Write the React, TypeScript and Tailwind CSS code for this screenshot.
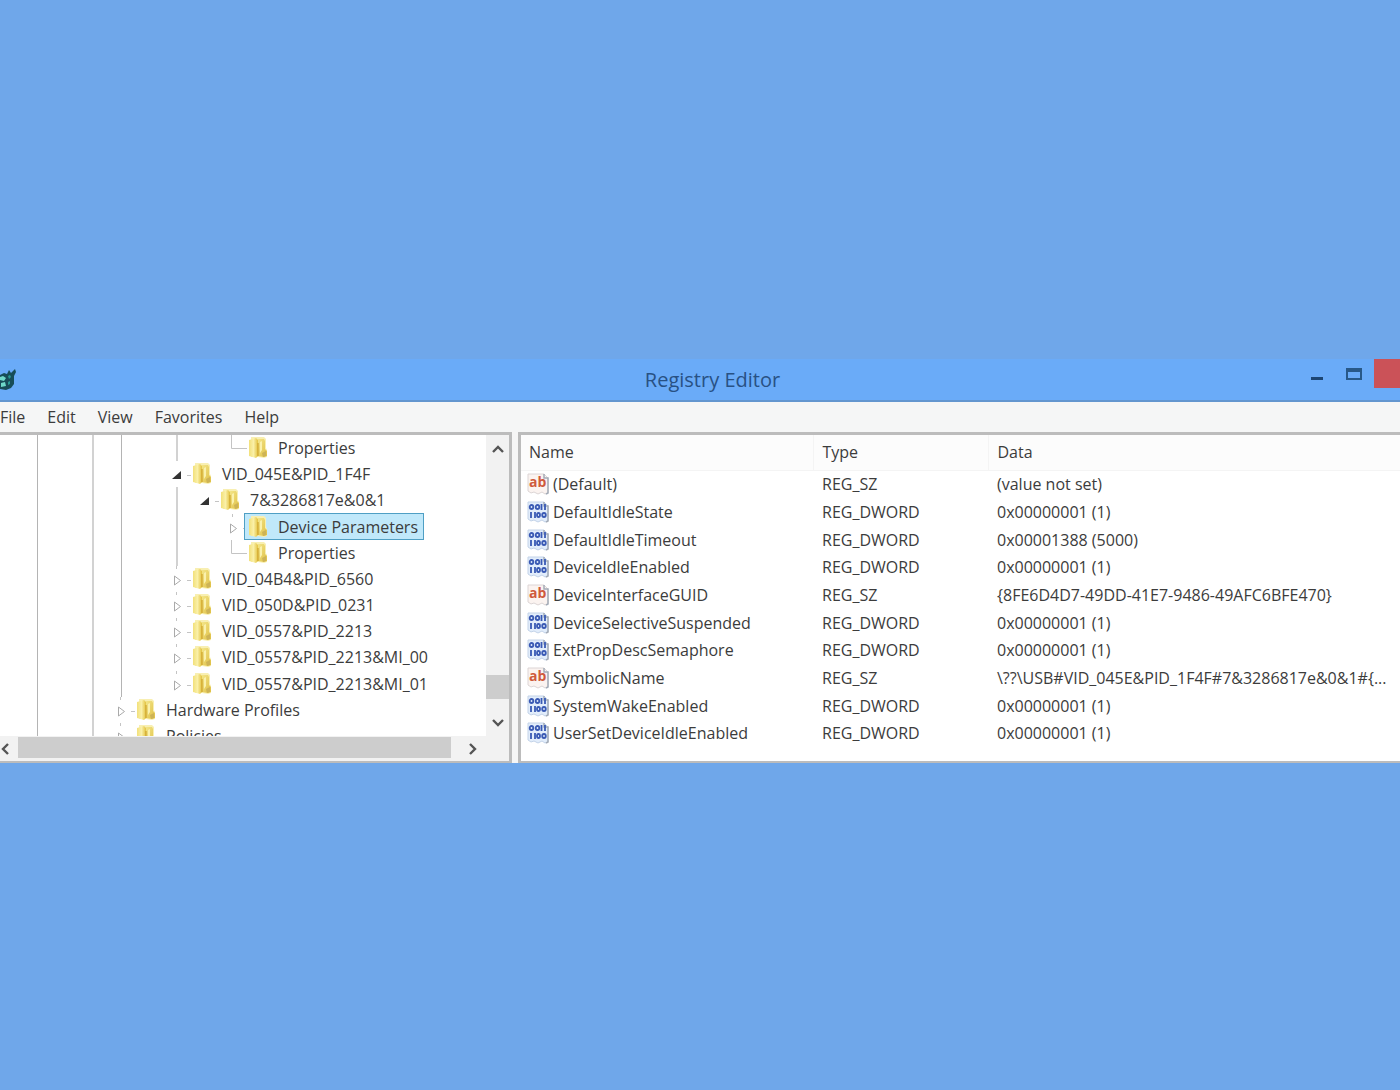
import clsx from 'clsx';
import { useState } from 'react';

type Node = {
  label: string;
  level: number;
  guides: number[];
  state: 'open' | 'closed' | 'leaf';
};

const NODES: Node[] = [
  { label: 'Properties', level: 7, guides: [0, 2, 3, 5], state: 'leaf' },
  { label: 'VID_045E&PID_1F4F', level: 5, guides: [0, 2, 3], state: 'open' },
  { label: '7&3286817e&0&1', level: 6, guides: [0, 2, 3, 5], state: 'open' },
  { label: 'Device Parameters', level: 7, guides: [0, 2, 3, 5], state: 'closed' },
  { label: 'Properties', level: 7, guides: [0, 2, 3, 5], state: 'leaf' },
  { label: 'VID_04B4&PID_6560', level: 5, guides: [0, 2, 3], state: 'closed' },
  { label: 'VID_050D&PID_0231', level: 5, guides: [0, 2, 3], state: 'closed' },
  { label: 'VID_0557&PID_2213', level: 5, guides: [0, 2, 3], state: 'closed' },
  { label: 'VID_0557&PID_2213&MI_00', level: 5, guides: [0, 2, 3], state: 'closed' },
  { label: 'VID_0557&PID_2213&MI_01', level: 5, guides: [0, 2, 3], state: 'closed' },
  { label: 'Hardware Profiles', level: 3, guides: [0, 2], state: 'closed' },
  { label: 'Policies', level: 3, guides: [0, 2], state: 'closed' }
];

const VALUES = [
  { name: '(Default)', type: 'REG_SZ', data: '(value not set)' },
  { name: 'DefaultIdleState', type: 'REG_DWORD', data: '0x00000001 (1)' },
  { name: 'DefaultIdleTimeout', type: 'REG_DWORD', data: '0x00001388 (5000)' },
  { name: 'DeviceIdleEnabled', type: 'REG_DWORD', data: '0x00000001 (1)' },
  {
    name: 'DeviceInterfaceGUID',
    type: 'REG_SZ',
    data: '{8FE6D4D7-49DD-41E7-9486-49AFC6BFE470}'
  },
  { name: 'DeviceSelectiveSuspended', type: 'REG_DWORD', data: '0x00000001 (1)' },
  { name: 'ExtPropDescSemaphore', type: 'REG_DWORD', data: '0x00000001 (1)' },
  {
    name: 'SymbolicName',
    type: 'REG_SZ',
    data: '\\??\\USB#VID_045E&PID_1F4F#7&3286817e&0&1#{...'
  },
  { name: 'SystemWakeEnabled', type: 'REG_DWORD', data: '0x00000001 (1)' },
  { name: 'UserSetDeviceIdleEnabled', type: 'REG_DWORD', data: '0x00000001 (1)' }
];

const MENUS = ['File', 'Edit', 'View', 'Favorites', 'Help'];

const AppIcon = () => (
  <svg width="18" height="24" viewBox="0 0 18 24" aria-hidden="true">
    <path d="M0 8l4-2 3 1 2-4 2 3 4-4 1 3-2 4 0 8-3 4-5 2-6-1z" fill="#174d58" />
    <path d="M0 10l3-1 3 2-2 3-4-1zM1 16l4-1 1 4-5 1z" fill="#6fd9c9" />
    <path d="M8 9l2-1 1 2-2 2zM8 15l2-1 0 3-2 1z" fill="#2b9a94" />
  </svg>
);

const FolderIcon = () => (
  <svg width="20" height="24" viewBox="0 0 20 24" className="shrink-0" aria-hidden="true">
    <defs>
      <linearGradient id="folder-left" x1="0" y1="0" x2="1" y2="0">
        <stop offset="0" stopColor="#f2e07a" />
        <stop offset=".5" stopColor="#faf0a8" />
        <stop offset="1" stopColor="#e2c23f" />
      </linearGradient>
      <linearGradient id="folder-right" x1="0" y1="0" x2="1" y2="1">
        <stop offset="0" stopColor="#f3e588" />
        <stop offset="1" stopColor="#dfbf45" />
      </linearGradient>
    </defs>
    <path d="M3 1h13l2 2v9l1 2v7l-3 1-6-1H3z" fill="#f8efb2" />
    <path d="M10 3h6l1 2v8l2 2v5l-3 1-6-1z" fill="url(#folder-right)" />
    <path d="M1 4l7-2 2 2v16l-2 2-7-2z" fill="url(#folder-left)" />
    <path d="M12 6l2-1v9l-2 3z" fill="#faf1ae" />
    <path d="M10 7v13" stroke="#cfa42e" strokeWidth="1.2" />
    <path d="M14 17l4-2v5l-3 1z" fill="#cdb356" />
  </svg>
);

const ValueIcon = ({ type }: { type: string }) => (
  <svg width="22" height="22" viewBox="0 0 22 22" className="shrink-0" aria-hidden="true">
    <path
      d="M1 1h16l4 4v15l-3 1-3-2-4 2-4-2-3 1-3-2z"
      fill={type === 'REG_SZ' ? '#fbf3f0' : '#e2edfb'}
      stroke={type === 'REG_SZ' ? '#dcd5d5' : '#c3d3e8'}
    />
    <path d="M17 1v4h4v15l-2 1" fill="none" stroke="#a4acb8" strokeWidth="1.5" />
    {type === 'REG_SZ' ? (
      <text x="2" y="14" fontSize="14" fontWeight="700" fill="#cf5a3c" fontFamily="Open Sans, sans-serif">
        ab
      </text>
    ) : (
      <g fill="none" stroke="#3a5ab4" strokeWidth="1.8">
        <ellipse cx="4.500" cy="6" rx="1.800" ry="2" />
        <ellipse cx="10.500" cy="6" rx="1.800" ry="2" />
        <path d="M14.500 3v6M18 3v6M4 11v6M8 11v6" />
        <ellipse cx="11.500" cy="14" rx="1.500" ry="2" />
        <ellipse cx="17" cy="14" rx="1.800" ry="2" />
      </g>
    )}
  </svg>
);

const Chevron = ({ d }: { d: string }) => (
  <svg width="12" height="12" viewBox="0 0 12 12" aria-hidden="true">
    <path d={d} fill="none" stroke="#555" strokeWidth="2.4" />
  </svg>
);

const Expander = ({ state }: { state: Node['state'] }) => (
  <svg width="25" height="26" viewBox="0 0 25 26" className="block overflow-visible" aria-hidden="true">
    {state === 'leaf' && <path d="M12.5 0v13.5H28" fill="none" stroke="#c4c4c4" />}
    {state === 'open' && (
      <>
        <path d="M18 10v8H9z" fill="#333" />
        <path d="M24 14.500h4" stroke="#c4c4c4" />
      </>
    )}
    {state === 'closed' && (
      <>
        <path d="M11.500 10v9l6-4.500z" fill="#fff" stroke="#aaa" />
        <path d="M13.500 0v3M24 14.500h4" stroke="#c4c4c4" />
      </>
    )}
  </svg>
);

const TreeRow = ({
  node,
  selected,
  onSelect
}: {
  node: Node;
  selected: boolean;
  onSelect: () => void;
}) => (
  <li role="treeitem" aria-selected={selected} className="flex min-h-0 items-stretch">
    {Array.from({ length: node.level }, (_, i) => (
      <span key={i} className="flex w-7 shrink-0 justify-center">
        {node.guides.includes(i) && (
          <span className={clsx(i === 0 || i === 3 ? 'w-px bg-[#b4b4b4]' : 'w-0.5 bg-[#d2d2d2]')} />
        )}
      </span>
    ))}
    {node.state === 'leaf' ? (
      <span className="w-[25px] shrink-0">
        <Expander state="leaf" />
      </span>
    ) : (
      <button
        className="w-[25px] shrink-0"
        aria-label={(node.state === 'open' ? 'Collapse ' : 'Expand ') + node.label}
      >
        <Expander state={node.state} />
      </button>
    )}
    <button
      onClick={onSelect}
      className={clsx(
        'flex items-center gap-2.5 border pr-[5px] pl-[3px] leading-6 whitespace-nowrap',
        selected ? 'border-[#4f9fc4] bg-[#c0e8fa]' : 'border-transparent'
      )}
    >
      <FolderIcon />
      {node.label}
    </button>
  </li>
);

const TreePane = () => {
  const [selected, setSelected] = useState(3);

  return (
    <section className="flex w-[512px] shrink-0 flex-col border-t-3 border-r-3 border-b-2 border-[#bcbcbc] bg-white">
      <div className="flex h-[301px]">
        <div className="min-w-0 flex-1 overflow-hidden">
          <ul role="tree" className="grid h-[314px] auto-rows-fr pl-[23px]">
            {NODES.map((node, i) => (
              <TreeRow key={i} node={node} selected={selected === i} onSelect={() => setSelected(i)} />
            ))}
          </ul>
        </div>
        <div className="flex w-[23px] flex-col items-center bg-[#f2f2f2]">
          <button aria-label="Scroll up" className="flex h-7 items-center">
            <Chevron d="M1 9l5-5 5 5" />
          </button>
          <div className="flex w-full flex-1 flex-col justify-end pb-[9px]">
            <div className="h-6 bg-[#cdcdcd]" />
          </div>
          <button aria-label="Scroll down" className="flex h-7 items-center">
            <Chevron d="M1 4l5 5 5-5" />
          </button>
        </div>
      </div>
      <div className="flex h-[25px] bg-[#f2f2f2]">
        <button aria-label="Scroll left" className="flex w-[18px] items-center">
          <Chevron d="M8 1L3 6l5 5" />
        </button>
        <div className="mt-px mb-[3px] flex-1 bg-[#cdcdcd]" />
        <button aria-label="Scroll right" className="flex w-[58px] items-center pl-4">
          <Chevron d="M3 1l5 5-5 5" />
        </button>
      </div>
    </section>
  );
};

const ValuesPane = () => (
  <section className="min-w-0 flex-1 overflow-hidden border-t-3 border-b-2 border-l-3 border-[#bcbcbc] bg-white">
    <table className="h-[312px] w-full table-fixed text-left">
      <colgroup>
        <col className="w-[292px]" />
        <col className="w-[175px]" />
        <col />
      </colgroup>
      <thead>
        <tr className="h-[35px] bg-[#fcfcfc]">
          <th className="border-r border-b border-[#f4f4f4] pl-2 font-normal">Name</th>
          <th className="border-r border-b border-[#f4f4f4] pl-[9px] font-normal">Type</th>
          <th className="border-b border-[#f4f4f4] pl-[9px] font-normal">Data</th>
        </tr>
      </thead>
      <tbody>
        {VALUES.map((v) => (
          <tr key={v.name} className="leading-6 whitespace-nowrap">
            <td className="p-0 pl-1.5">
              <span className="flex items-center gap-1">
                <ValueIcon type={v.type} />
                {v.name}
              </span>
            </td>
            <td className="p-0 pl-[9px]">{v.type}</td>
            <td className="p-0 pl-[9px]">{v.data}</td>
          </tr>
        ))}
      </tbody>
    </table>
  </section>
);

export default function App() {
  return (
    <main className="min-h-screen overflow-hidden bg-[#6fa7ea] pt-[359px] font-['Open_Sans','Noto_Sans',sans-serif] text-base text-[#3c3c3c]">
      <header className="flex h-[43px] items-start border-b-2 border-[#6396cf] bg-[#6aabf8]">
        <div className="flex w-[124px] items-center pt-2">
          <AppIcon />
        </div>
        <h1 className="flex-1 text-center text-xl leading-[42px] text-[#285184]">Registry Editor</h1>
        <button aria-label="Minimize" className="flex h-[29px] w-8 items-end justify-center pb-2">
          <span className="h-[3px] w-3 bg-[#1d4674]" />
        </button>
        <button aria-label="Maximize" className="flex h-[29px] w-[41px] items-center justify-center">
          <span className="h-3 w-4 border-2 border-t-4 border-[#285888]" />
        </button>
        <button aria-label="Close" className="h-[29px] w-[26px] bg-[#cb5258]" />
      </header>
      <nav className="flex h-[30px] items-center gap-[22px] bg-[#f5f6f6]">
        {MENUS.map((menu) => (
          <button key={menu}>{menu}</button>
        ))}
      </nav>
      <div className="flex gap-[6px] bg-[#f6f6f6]">
        <TreePane />
        <ValuesPane />
      </div>
    </main>
  );
}
